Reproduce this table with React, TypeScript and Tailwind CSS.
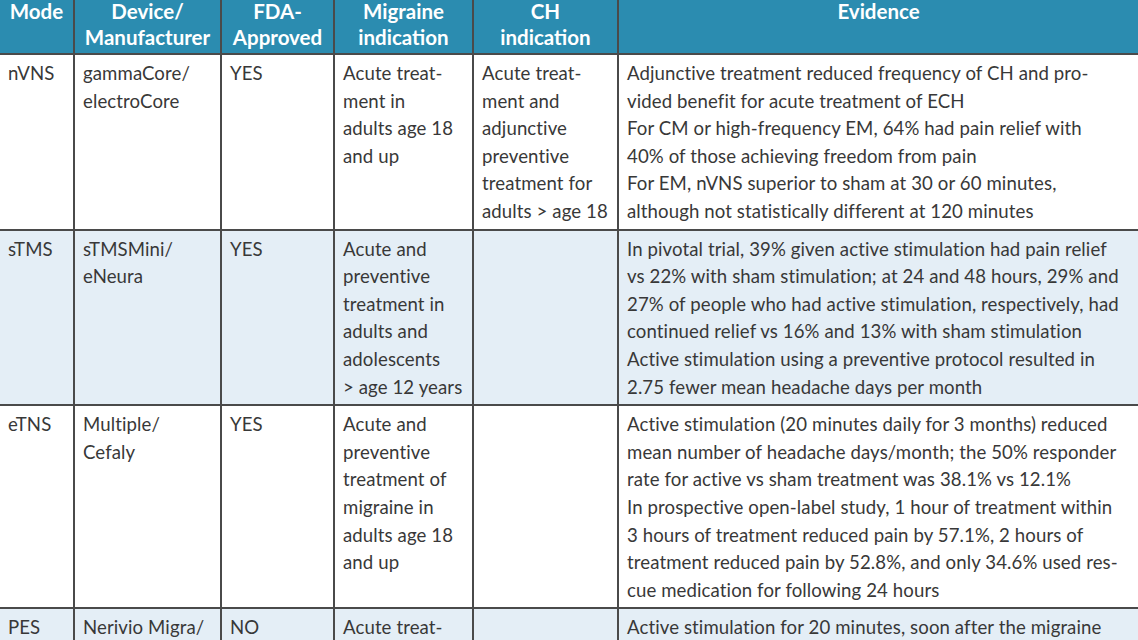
const rows: {
  mode: string
  device: string[]
  fda: string
  migraine: string[]
  ch: string[]
  evidence: string[]
  shaded: boolean
}[] = [
  {
    mode: 'nVNS',
    device: ['gammaCore/', 'electroCore'],
    fda: 'YES',
    migraine: ['Acute treat-', 'ment in', 'adults age 18', 'and up'],
    ch: ['Acute treat-', 'ment and', 'adjunctive', 'preventive', 'treatment for', 'adults > age 18'],
    evidence: [
      'Adjunctive treatment reduced frequency of CH and pro-',
      'vided benefit for acute treatment of ECH',
      'For CM or high-frequency EM, 64% had pain relief with',
      '40% of those achieving freedom from pain',
      'For EM, nVNS superior to sham at 30 or 60 minutes,',
      'although not statistically different at 120 minutes',
    ],
    shaded: false,
  },
  {
    mode: 'sTMS',
    device: ['sTMSMini/', 'eNeura'],
    fda: 'YES',
    migraine: ['Acute and', 'preventive', 'treatment in', 'adults and', 'adolescents', '> age 12 years'],
    ch: [],
    evidence: [
      'In pivotal trial, 39% given active stimulation had pain relief',
      'vs 22% with sham stimulation; at 24 and 48 hours, 29% and',
      '27% of people who had active stimulation, respectively, had',
      'continued relief vs 16% and 13% with sham stimulation',
      'Active stimulation using a preventive protocol resulted in',
      '2.75 fewer mean headache days per month',
    ],
    shaded: true,
  },
  {
    mode: 'eTNS',
    device: ['Multiple/', 'Cefaly'],
    fda: 'YES',
    migraine: ['Acute and', 'preventive', 'treatment of', 'migraine in', 'adults age 18', 'and up'],
    ch: [],
    evidence: [
      'Active stimulation (20 minutes daily for 3 months) reduced',
      'mean number of headache days/month; the 50% responder',
      'rate for active vs sham treatment was 38.1% vs 12.1%',
      'In prospective open-label study, 1 hour of treatment within',
      '3 hours of treatment reduced pain by 57.1%, 2 hours of',
      'treatment reduced pain by 52.8%, and only 34.6% used res-',
      'cue medication for following 24 hours',
    ],
    shaded: false,
  },
  {
    mode: 'PES',
    device: ['Nerivio Migra/'],
    fda: 'NO',
    migraine: ['Acute treat-'],
    ch: [],
    evidence: ['Active stimulation for 20 minutes, soon after the migraine'],
    shaded: true,
  },
]

function Lines({ lines }: { lines: string[] }) {
  return (
    <>
      {lines.map((line, i) => (
        <div key={i} className="whitespace-nowrap">
          {line}
        </div>
      ))}
    </>
  )
}

const cell = 'border-2 border-[#4a4a4a] align-top pl-[8px] pr-1 pt-[5px] pb-[3px]'
const head = 'border-2 border-[#4a4a4a] border-t-0 align-top text-center font-bold text-white px-1 pt-0'

export default function App() {
  return (
    <div className="w-[1138px] h-[640px] overflow-hidden bg-white">
      <table
        className="table-fixed border-collapse w-[1142px] -mt-[2px] -ml-[2px] text-[18.6px] tracking-[0.1px] leading-[27.6px] text-[#383838]"
        style={{ fontFamily: 'Lato, "Open Sans", sans-serif' }}
      >
        <colgroup>
          <col className="w-[75px]" />
          <col className="w-[147px]" />
          <col className="w-[113px]" />
          <col className="w-[139px]" />
          <col className="w-[145px]" />
          <col />
        </colgroup>
        <thead>
          <tr className="h-[56px] bg-[#2b8cb0] text-[20.5px] leading-[26px] tracking-normal">
            <th className={head}>Mode</th>
            <th className={head}>
              Device/
              <br />
              Manufacturer
            </th>
            <th className={head}>
              FDA-
              <br />
              Approved
            </th>
            <th className={head}>
              Migraine
              <br />
              indication
            </th>
            <th className={head}>
              CH
              <br />
              indication
            </th>
            <th className={head}>Evidence</th>
          </tr>
        </thead>
        <tbody>
          {rows.map((row) => (
            <tr key={row.mode} className={row.shaded ? 'bg-[#e4eef6]' : 'bg-white'}>
              <td className={cell}>{row.mode}</td>
              <td className={cell}>
                <Lines lines={row.device} />
              </td>
              <td className={cell}>{row.fda}</td>
              <td className={cell}>
                <Lines lines={row.migraine} />
              </td>
              <td className={cell}>
                <Lines lines={row.ch} />
              </td>
              <td className={cell}>
                <Lines lines={row.evidence} />
              </td>
            </tr>
          ))}
        </tbody>
      </table>
    </div>
  )
}
